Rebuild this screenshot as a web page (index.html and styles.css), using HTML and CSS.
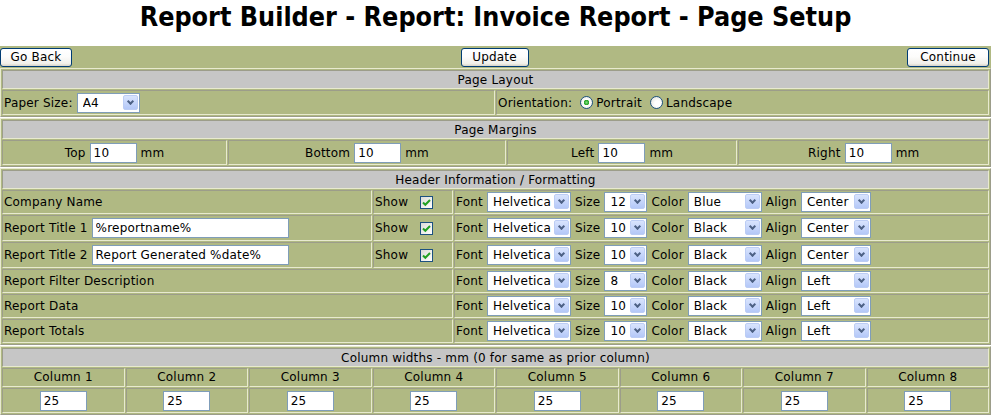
FILE: index.html
```html
<!DOCTYPE html>
<html lang="en">
<head>
<meta charset="utf-8">
<title>Report Builder - Report: Invoice Report - Page Setup</title>
<link rel="stylesheet" href="styles.css">
</head>
<body>
<h1 class="title">Report Builder - Report: Invoice Report - Page Setup</h1>

<div class="toolbar">
  <div class="tb-left"><button class="btn btn-back" type="button">Go Back</button></div>
  <div class="tb-center"><button class="btn btn-update" type="button">Update</button></div>
  <div class="tb-right"><button class="btn btn-cont" type="button">Continue</button></div>
</div>

<table class="sec">
  <tr><td class="hd" colspan="2">Page Layout</td></tr>
  <tr class="row tall">
    <td class="half">Paper Size: <span class="dd"><select class="w-paper"><option>A4</option></select></span></td>
    <td class="half">Orientation: <span class="radio on"></span>Portrait <span class="radio"></span>Landscape</td>
  </tr>
</table>

<table class="sec">
  <tr><td class="hd" colspan="4">Page Margins</td></tr>
  <tr class="row tall">
    <td class="ctr">Top <input class="txt w-num" type="text" value="10"> mm</td>
    <td class="ctr">Bottom <input class="txt w-num" type="text" value="10"> mm</td>
    <td class="ctr">Left <input class="txt w-num" type="text" value="10"> mm</td>
    <td class="ctr">Right <input class="txt w-num" type="text" value="10"> mm</td>
  </tr>
</table>

<table class="sec hdr">
  <colgroup><col class="c1"><col class="c2"><col class="c3"></colgroup>
  <tr><td class="hd" colspan="3">Header Information / Formatting</td></tr>
  <tr class="row">
    <td>Company Name</td>
    <td>Show <span class="cb"><svg width="11" height="11" viewBox="0 0 11 11"><path d="M2 5.5 L4.3 7.8 L9 3" fill="none" stroke="#21a121" stroke-width="2"/></svg></span></td>
    <td>Font <span class="dd"><select class="w-font"><option>Helvetica</option></select></span> Size <span class="dd"><select class="w-size"><option>12</option></select></span> Color <span class="dd"><select class="w-color"><option>Blue</option></select></span> Align <span class="dd"><select class="w-align"><option>Center</option></select></span></td>
  </tr>
  <tr class="row">
    <td>Report Title 1 <input class="txt w-title" type="text" value="%reportname%"></td>
    <td>Show <span class="cb"><svg width="11" height="11" viewBox="0 0 11 11"><path d="M2 5.5 L4.3 7.8 L9 3" fill="none" stroke="#21a121" stroke-width="2"/></svg></span></td>
    <td>Font <span class="dd"><select class="w-font"><option>Helvetica</option></select></span> Size <span class="dd"><select class="w-size"><option>10</option></select></span> Color <span class="dd"><select class="w-color"><option>Black</option></select></span> Align <span class="dd"><select class="w-align"><option>Center</option></select></span></td>
  </tr>
  <tr class="row">
    <td>Report Title 2 <input class="txt w-title" type="text" value="Report Generated %date%"></td>
    <td>Show <span class="cb"><svg width="11" height="11" viewBox="0 0 11 11"><path d="M2 5.5 L4.3 7.8 L9 3" fill="none" stroke="#21a121" stroke-width="2"/></svg></span></td>
    <td>Font <span class="dd"><select class="w-font"><option>Helvetica</option></select></span> Size <span class="dd"><select class="w-size"><option>10</option></select></span> Color <span class="dd"><select class="w-color"><option>Black</option></select></span> Align <span class="dd"><select class="w-align"><option>Center</option></select></span></td>
  </tr>
  <tr class="row">
    <td colspan="2">Report Filter Description</td>
    <td>Font <span class="dd"><select class="w-font"><option>Helvetica</option></select></span> Size <span class="dd"><select class="w-size"><option>8</option></select></span> Color <span class="dd"><select class="w-color"><option>Black</option></select></span> Align <span class="dd"><select class="w-align"><option>Left</option></select></span></td>
  </tr>
  <tr class="row">
    <td colspan="2">Report Data</td>
    <td>Font <span class="dd"><select class="w-font"><option>Helvetica</option></select></span> Size <span class="dd"><select class="w-size"><option>10</option></select></span> Color <span class="dd"><select class="w-color"><option>Black</option></select></span> Align <span class="dd"><select class="w-align"><option>Left</option></select></span></td>
  </tr>
  <tr class="row">
    <td colspan="2">Report Totals</td>
    <td>Font <span class="dd"><select class="w-font"><option>Helvetica</option></select></span> Size <span class="dd"><select class="w-size"><option>10</option></select></span> Color <span class="dd"><select class="w-color"><option>Black</option></select></span> Align <span class="dd"><select class="w-align"><option>Left</option></select></span></td>
  </tr>
</table>

<table class="sec cols">
  <tr><td class="hd" colspan="8">Column widths - mm (0 for same as prior column)</td></tr>
  <tr class="lbl">
    <td>Column 1</td><td>Column 2</td><td>Column 3</td><td>Column 4</td>
    <td>Column 5</td><td>Column 6</td><td>Column 7</td><td>Column 8</td>
  </tr>
  <tr class="row tall">
    <td><input class="txt w-num" type="text" value="25"></td>
    <td><input class="txt w-num" type="text" value="25"></td>
    <td><input class="txt w-num" type="text" value="25"></td>
    <td><input class="txt w-num" type="text" value="25"></td>
    <td><input class="txt w-num" type="text" value="25"></td>
    <td><input class="txt w-num" type="text" value="25"></td>
    <td><input class="txt w-num" type="text" value="25"></td>
    <td><input class="txt w-num" type="text" value="25"></td>
  </tr>
</table>
</body>
</html>
```

FILE: styles.css
```css
html, body {
  margin: 0;
  padding: 0;
  background: #ffffff;
}
body {
  font: 12px "DejaVu Sans", Verdana, sans-serif;
  letter-spacing: 0.2px;
  color: #000;
}

.title {
  margin: 0;
  height: 46px;
  font: bold 26.7px/34px "DejaVu Sans Condensed", "DejaVu Sans", sans-serif;
  letter-spacing: 0;
  text-align: center;
}

.toolbar {
  display: grid;
  grid-template-columns: 1fr auto 1fr;
  align-items: center;
  height: 22px;
  padding: 0 2px 0 0;
  background: #b0b983;
}
.tb-right { text-align: right; }

.btn {
  font: 12px "DejaVu Sans", Verdana, sans-serif;
  letter-spacing: 0.2px;
  color: #000;
  height: 19px;
  margin: 0;
  padding: 0;
  border: 1px solid #003c74;
  border-radius: 3px;
  background: linear-gradient(#ffffff 0%, #fcfcfb 45%, #f1f0ea 85%, #d8d3c8 100%);
  vertical-align: middle;
}
.btn-back { width: 72px; }
.btn-update { width: 68px; }
.btn-cont { width: 82px; }

table.sec {
  width: 100%;
  border-collapse: separate;
  border-spacing: 1px;
  background: #b0b983;
  border: 1px solid;
  border-color: #e8eacf #9c9d8a #9c9d8a #e8eacf;
}
table.sec + table.sec { margin-top: 1px; }
table.sec td {
  border: 1px solid;
  border-color: #9c9d8a #e8eacf #e8eacf #9c9d8a;
  padding: 1px;
  white-space: nowrap;
  vertical-align: middle;
}
table.sec td.hd {
  background: #c6c6c6;
  text-align: center;
  height: 15px;
  line-height: 15px;
  padding: 2px 1px 0;
}
tr.row td { height: 20px; }
tr.row.tall td { height: 21px; }
td.half { width: 50%; }
td.ctr { text-align: center; }

table.hdr col.c2 { width: 80px; }
table.hdr col.c3 { width: 535px; }

table.cols { table-layout: fixed; }
table.cols td { text-align: center; }
tr.lbl td { height: 15px; line-height: 15px; }

.txt {
  box-sizing: border-box;
  height: 20px;
  margin: 0;
  padding: 0 3px;
  border: 1px solid #7f9db9;
  background: #fff;
  font: 12px "DejaVu Sans", Verdana, sans-serif;
  letter-spacing: 0.2px;
  color: #000;
  vertical-align: middle;
}
.w-num { width: 47px; }
.w-title { width: 197px; margin: 1px 0; }

.dd {
  position: relative;
  display: inline-block;
  vertical-align: middle;
}
.dd select {
  -webkit-appearance: none;
  appearance: none;
  box-sizing: border-box;
  height: 20px;
  margin: 0;
  padding: 0 18px 0 5px;
  border: 1px solid #7f9db9;
  border-radius: 0;
  background: #fff;
  font: 12px "DejaVu Sans", Verdana, sans-serif;
  letter-spacing: 0.2px;
  color: #000;
  display: block;
}
.dd::before {
  content: "";
  position: absolute;
  top: 2px;
  right: 2px;
  width: 15px;
  height: 15px;
  border: 1px solid #bccdf5;
  border-radius: 2px;
  background: linear-gradient(#d9e4fd, #b4c8f8);
  box-sizing: border-box;
  pointer-events: none;
}
.dd::after {
  content: "";
  position: absolute;
  top: 6px;
  right: 7px;
  width: 3px;
  height: 3px;
  border-right: 2px solid #4d6185;
  border-bottom: 2px solid #4d6185;
  transform: rotate(45deg);
  pointer-events: none;
}
.w-paper { width: 63px; }
.w-font { width: 84px; }
.w-size { width: 43px; }
.w-color { width: 74px; }
.w-align { width: 70px; }

.radio {
  display: inline-block;
  box-sizing: border-box;
  width: 13px;
  height: 13px;
  margin: 0 3px 0 4px;
  border: 1px solid #1c5180;
  border-radius: 50%;
  background: radial-gradient(circle at 60% 60%, #ffffff 30%, #dcdcd4 100%);
  vertical-align: -2px;
}
.radio.on {
  background: radial-gradient(circle, #7fe07f 0, #21a121 2.5px, #ffffff 3px, #e2e2da 100%);
}

.cb {
  display: inline-flex;
  align-items: center;
  justify-content: center;
  box-sizing: border-box;
  width: 13px;
  height: 13px;
  margin-left: 8px;
  border: 1px solid #1c5180;
  background: linear-gradient(135deg, #dcdcd7, #ffffff);
  vertical-align: -2px;
}
.cb svg { display: block; }
```
